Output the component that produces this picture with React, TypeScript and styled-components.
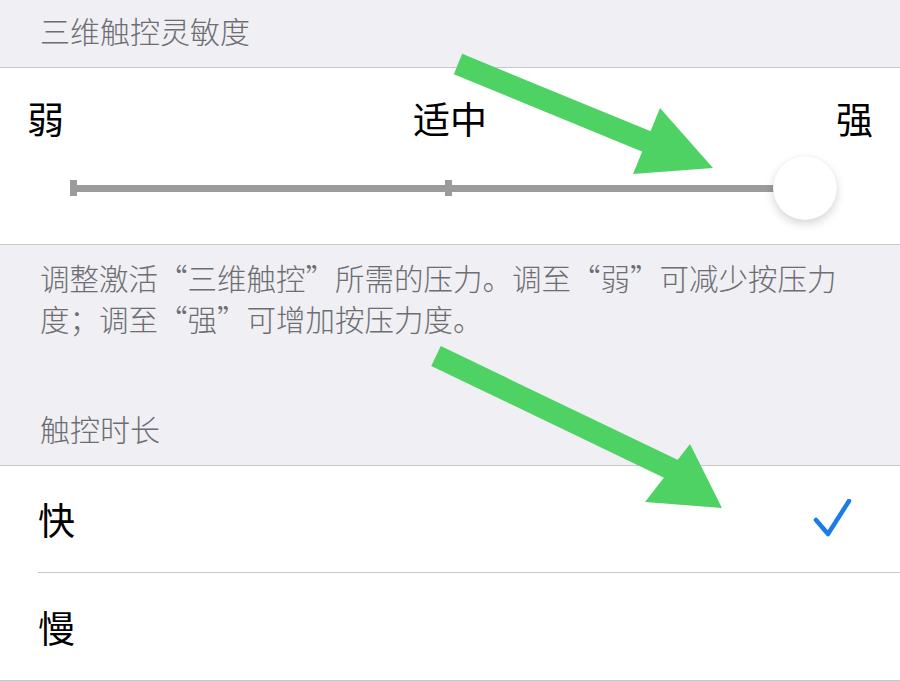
import styled, { createGlobalStyle } from "styled-components";

const GlobalStyle = createGlobalStyle`
  html, body {
    margin: 0;
    padding: 0;
    background: #efeff4;
  }
  body {
    font-family: "Noto Sans CJK SC", "Noto Sans", sans-serif;
  }
`;

const Page = styled.div`
  position: relative;
  width: 900px;
  height: 681px;
  overflow: hidden;
  background: #efeff4;
  display: flex;
  flex-direction: column;
  & > * {
    flex-shrink: 0;
  }
`;

const SectionHeader = styled.div<{ height: number }>`
  height: ${(p) => p.height}px;
  box-sizing: border-box;
  padding: 0 40px 22px;
  display: flex;
  align-items: flex-end;
  color: #6d6d72;
  font-size: 30px;
  font-weight: 300;
  line-height: 1;
`;

const SliderCard = styled.div`
  height: 178px;
  box-sizing: border-box;
  background: #fff;
  border-top: 1px solid #c8c7cc;
  border-bottom: 1px solid #c8c7cc;
  padding: 28px 27px 0 27px;
  display: flex;
  flex-direction: column;
`;

const Labels = styled.div`
  display: flex;
  justify-content: space-between;
  font-size: 37px;
  font-weight: 400;
  color: #000;
  line-height: 44px;
`;

const TrackRow = styled.div`
  margin: 30px 0 0 43px;
  width: 735px;
  height: 36px;
  position: relative;
  display: flex;
  align-items: center;
`;

const Track = styled.div`
  flex: 1;
  height: 7px;
  background: #9b9b9b;
`;

const Tick = styled.div<{ left: string }>`
  position: absolute;
  left: ${(p) => p.left};
  top: 10px;
  width: 7px;
  height: 16px;
  background: #9b9b9b;
`;

const Thumb = styled.div`
  position: absolute;
  right: -32px;
  top: -14px;
  width: 64px;
  height: 64px;
  border-radius: 50%;
  background: #fff;
  box-shadow: 0 4px 10px rgba(0, 0, 0, 0.16), 0 0 1px rgba(0, 0, 0, 0.1);
`;

const Footer = styled.div`
  box-sizing: border-box;
  padding: 12px 40px 0;
  height: 110px;
  color: #6d6d72;
  font-size: 29.5px;
  font-weight: 300;
  line-height: 41px;
`;

const ListCard = styled.div`
  background: #fff;
  border-top: 1px solid #c8c7cc;
  border-bottom: 1px solid #c8c7cc;
  display: flex;
  flex-direction: column;
`;

const Row = styled.div<{ last?: boolean }>`
  height: 107px;
  margin-left: 38px;
  padding-right: 48px;
  box-sizing: border-box;
  display: flex;
  align-items: center;
  justify-content: space-between;
  border-bottom: ${(p) => (p.last ? "none" : "1px solid #c8c7cc")};
  font-size: 37px;
  color: #000;
`;

const Overlay = styled.svg`
  position: absolute;
  left: 0;
  top: 0;
  pointer-events: none;
`;

function Check() {
  return (
    <svg width="40" height="40" viewBox="0 0 40 40">
      <path
        d="M4 21 L16 35 L37 2"
        fill="none"
        stroke="#1b7ce8"
        strokeWidth="4.5"
        strokeLinecap="round"
        strokeLinejoin="round"
      />
    </svg>
  );
}

export default function App() {
  return (
    <Page>
      <GlobalStyle />
      <SectionHeader height={67}>三维触控灵敏度</SectionHeader>
      <SliderCard>
        <Labels>
          <span>弱</span>
          <span>适中</span>
          <span>强</span>
        </Labels>
        <TrackRow>
          <Track />
          <Tick left="0" />
          <Tick left="51%" />
          <Thumb />
        </TrackRow>
      </SliderCard>
      <Footer>
        调整激活“三维触控”所需的压力。调至“弱”可减少按压力
        <br />
        度；调至“强”可增加按压力度。
      </Footer>
      <SectionHeader height={110}>触控时长</SectionHeader>
      <ListCard>
        <Row>
          <span>快</span>
          <Check />
        </Row>
        <Row last>
          <span>慢</span>
        </Row>
      </ListCard>
      <Overlay width="900" height="681" viewBox="0 0 900 681">
        <g fill="#4fd264">
          <line x1="458" y1="64" x2="660" y2="147" stroke="#4fd264" strokeWidth="22" />
          <polygon points="660,108 713,168 633,174" />
          <line x1="436" y1="356" x2="690" y2="478" stroke="#4fd264" strokeWidth="22" />
          <polygon points="690,444 722,508 645,502" />
        </g>
      </Overlay>
    </Page>
  );
}
